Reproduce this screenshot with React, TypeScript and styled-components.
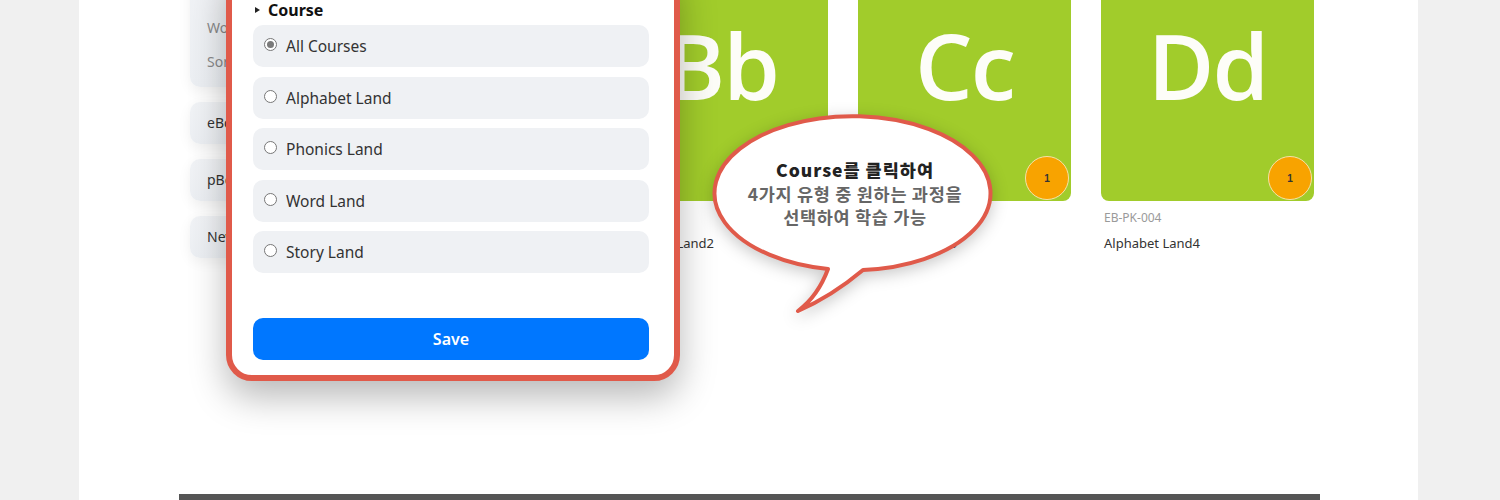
import React from 'react';
import styled, { createGlobalStyle } from 'styled-components';

const GlobalStyle = createGlobalStyle`
  html, body {
    margin: 0;
    padding: 0;
    background: #f0f0f0;
    overflow: hidden;
  }
  body {
    font-family: 'Noto Sans', 'Open Sans', Arial, sans-serif;
  }
`;

const Page = styled.div`
  position: relative;
  width: 1339px;
  height: 500px;
  margin-left: 79px;
  background: #fff;
  overflow: hidden;
`;

const Container = styled.div`
  width: 1141px;
  margin: -23px 0 0 100px;
`;

const Main = styled.div`
  display: flex;
  gap: 30px;
  height: 517px;
  padding-left: 11px;
`;

const Sidebar = styled.aside`
  width: 152px;
  display: flex;
  flex-direction: column;
  gap: 15px;
`;

const SideCard = styled.div<{ $list?: boolean }>`
  background: linear-gradient(180deg, #f1f3f6 0%, #eceff3 100%);
  border-radius: 10px;
  box-shadow: 0 4px 14px rgba(0, 0, 0, 0.06);
  padding: ${(p) => (p.$list ? '0 0 8px' : '0')};
  height: ${(p) => (p.$list ? 'auto' : '42px')};
  display: flex;
  flex-direction: column;
  justify-content: center;
`;

const SideItem = styled.div<{ $tone?: 'blue' | 'gray' | 'dark' }>`
  height: 34px;
  line-height: 34px;
  padding-left: 17px;
  font-size: 14px;
  white-space: nowrap;
  color: ${(p) =>
    p.$tone === 'blue' ? '#2b7bea' : p.$tone === 'gray' ? '#8a8a8a' : '#333'};
`;

const Grid = styled.section`
  padding-top: 11px;
  display: grid;
  grid-template-columns: repeat(4, 213px);
  column-gap: 30px;
  align-content: start;
`;

const Card = styled.div`
  display: flex;
  flex-direction: column;
`;

const Tile = styled.div`
  position: relative;
  height: 213px;
  background: #a1cc2b;
  border-radius: 8px;
  display: flex;
  justify-content: center;
  align-items: flex-start;
  padding-top: 32px;
  box-sizing: border-box;
`;

const Letter = styled.span`
  font-family: 'Open Sans', 'Noto Sans', sans-serif;
  font-weight: 600;
  font-size: 91px;
  line-height: 1;
  letter-spacing: -2px;
  color: #fdfdf8;
`;

const Badge = styled.div`
  position: absolute;
  right: 2px;
  bottom: 1px;
  width: 44px;
  height: 44px;
  border-radius: 50%;
  background: #f8a300;
  border: 1.5px solid #f6e2a8;
  box-sizing: border-box;
  display: flex;
  align-items: center;
  justify-content: center;
  font-family: 'Liberation Sans', Arial, sans-serif;
  font-size: 10px;
  font-weight: 700;
  color: #333;
`;

const Code = styled.div`
  margin-top: 8px;
  padding-left: 3px;
  font-size: 12px;
  line-height: 18px;
  color: #9a9a9a;
`;

const Title = styled.div`
  margin-top: 6px;
  padding-left: 3px;
  font-size: 13px;
  line-height: 20px;
  color: #333;
`;

const Footer = styled.div`
  height: 60px;
  background: #555;
`;

const Modal = styled.div`
  position: absolute;
  left: 147px;
  top: -40px;
  width: 454px;
  box-sizing: border-box;
  background: #fff;
  border: 6px solid #e05a4a;
  border-radius: 26px;
  box-shadow: 0 16px 36px rgba(0, 0, 0, 0.28);
  padding: 34px 25px 15px 21px;
  display: flex;
  flex-direction: column;
`;

const Heading = styled.div`
  display: flex;
  align-items: center;
  gap: 8px;
  height: 20px;
  padding-left: 2px;
  font-size: 16px;
  font-weight: 700;
  color: #111;
`;

const Caret = styled.span`
  width: 0;
  height: 0;
  border-top: 3px solid transparent;
  border-bottom: 3px solid transparent;
  border-left: 5px solid #222;
`;

const Options = styled.div`
  display: flex;
  flex-direction: column;
  gap: 9.5px;
  margin-top: 5px;
`;

const Option = styled.label`
  display: flex;
  align-items: center;
  gap: 9px;
  height: 42px;
  padding-left: 11px;
  border-radius: 10px;
  background: #eff1f4;
  font-size: 15.5px;
  color: #333;
`;

const Radio = styled.span<{ $checked?: boolean }>`
  width: 13px;
  height: 13px;
  box-sizing: border-box;
  border-radius: 50%;
  border: 1px solid #777;
  background: #fff;
  display: flex;
  align-items: center;
  justify-content: center;
  margin-top: -3px;

  &::after {
    content: '';
    width: 7px;
    height: 7px;
    border-radius: 50%;
    background: ${(p) => (p.$checked ? '#7a7a7a' : 'transparent')};
  }
`;

const SaveButton = styled.button`
  margin-top: 45px;
  height: 42px;
  border: none;
  border-radius: 10px;
  background: #0077ff;
  color: #fff;
  font-family: inherit;
  font-size: 16px;
  font-weight: 600;
`;

const Bubble = styled.div`
  position: absolute;
  left: 621px;
  top: 100px;
  width: 310px;
  height: 220px;
`;

const BubbleShape = styled.svg`
  display: block;
  filter: drop-shadow(0 4px 8px rgba(0, 0, 0, 0.22));
`;

const BubbleText = styled.div`
  position: absolute;
  left: 0;
  top: 58px;
  width: 310px;
  text-align: center;
  font-family: 'Noto Sans CJK KR', 'Noto Sans', sans-serif;
  font-size: 17.5px;
  font-weight: 700;
  letter-spacing: 0.7px;
  line-height: 23.5px;
  color: #666;

  strong {
    color: #222;
    letter-spacing: 1px;
  }
`;

const courses = ['All Courses', 'Alphabet Land', 'Phonics Land', 'Word Land', 'Story Land'];

const tiles = [
  { letter: 'Aa', code: 'EB-PK-001', title: 'Alphabet Land1' },
  { letter: 'Bb', code: 'EB-PK-002', title: 'Alphabet Land2' },
  { letter: 'Cc', code: 'EB-PK-003', title: 'Alphabet Land3' },
  { letter: 'Dd', code: 'EB-PK-004', title: 'Alphabet Land4' },
];

function App() {
  return (
    <>
      <GlobalStyle />
      <Page>
        <Container>
          <Main>
            <Sidebar>
              <SideCard $list>
                <SideItem $tone="blue">Stage</SideItem>
                <SideItem $tone="gray">Word</SideItem>
                <SideItem $tone="gray">Sort</SideItem>
              </SideCard>
              <SideCard>
                <SideItem>eBook</SideItem>
              </SideCard>
              <SideCard>
                <SideItem>pBook</SideItem>
              </SideCard>
              <SideCard>
                <SideItem>New</SideItem>
              </SideCard>
            </Sidebar>
            <Grid>
              {tiles.map((tile) => (
                <Card key={tile.code}>
                  <Tile>
                    <Letter>{tile.letter}</Letter>
                    <Badge>1</Badge>
                  </Tile>
                  <Code>{tile.code}</Code>
                  <Title>{tile.title}</Title>
                </Card>
              ))}
            </Grid>
          </Main>
          <Footer />
        </Container>

        <Modal>
          <Heading>
            <Caret />
            Course
          </Heading>
          <Options>
            {courses.map((course, index) => (
              <Option key={course}>
                <Radio $checked={index === 0} />
                {course}
              </Option>
            ))}
          </Options>
          <SaveButton>Save</SaveButton>
        </Modal>

        <Bubble>
          <BubbleShape width="310" height="220" viewBox="0 0 310 220">
            <path
              d="M 128 169 Q 118 196 98 211 Q 132 196 163 170 A 138 77 0 1 0 128 169 Z"
              fill="#fff"
              stroke="#e05a4a"
              strokeWidth="4"
              strokeLinejoin="round"
            />
          </BubbleShape>
          <BubbleText>
            <strong>Course를 클릭하여</strong>
            <br />
            4가지 유형 중 원하는 과정을
            <br />
            선택하여 학습 가능
          </BubbleText>
        </Bubble>
      </Page>
    </>
  );
}

export default App;
